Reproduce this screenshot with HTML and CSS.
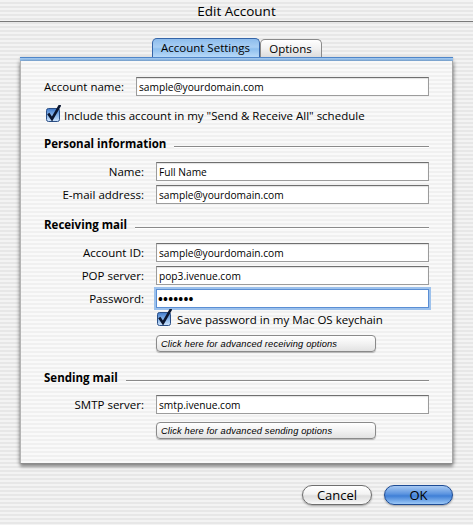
FILE: index.html
```html
<!DOCTYPE html>
<html>
<head>
<meta charset="utf-8">
<link rel="stylesheet" href="styles.css">
</head>
<body>
<div class="titlebar">Edit Account</div>
<div class="content">
  <div class="tabs">
    <div class="tab active">Account Settings</div>
    <div class="tab">Options</div>
  </div>
  <div class="strip"></div>
  <div class="panel">
    <div class="row acct">
      <label class="lbl-acct">Account name:</label>
      <input class="field" value="sample@yourdomain.com">
    </div>
    <div class="check-row first">
      <svg class="cb" width="15" height="17" viewBox="0 0 15 17">
        <defs>
          <linearGradient id="cbg" x1="0" y1="0" x2="0" y2="1">
            <stop offset="0" stop-color="#3f78c9"/>
            <stop offset="0.5" stop-color="#86b4ea"/>
            <stop offset="1" stop-color="#cfe4fb"/>
          </linearGradient>
        </defs>
        <rect x="0.5" y="3.5" width="13" height="13" rx="2" fill="url(#cbg)" stroke="#2b4f86"/>
        <path d="M3 9.5 L6 14 L13.5 1" fill="none" stroke="#0b1630" stroke-width="2.6" stroke-linecap="square"/>
      </svg>
      <span>Include this account in my "Send &amp; Receive All" schedule</span>
    </div>
    <div class="section"><span>Personal information</span></div>
    <div class="row"><label class="lbl">Name:</label><input class="field" value="Full Name"></div>
    <div class="row gap"><label class="lbl">E-mail address:</label><input class="field" value="sample@yourdomain.com"></div>
    <div class="section"><span>Receiving mail</span></div>
    <div class="row"><label class="lbl">Account ID:</label><input class="field" value="sample@yourdomain.com"></div>
    <div class="row gap"><label class="lbl">POP server:</label><input class="field" value="pop3.ivenue.com"></div>
    <div class="row gap"><label class="lbl">Password:</label><input class="field focus pw" value="&#8226;&#8226;&#8226;&#8226;&#8226;&#8226;&#8226;"></div>
    <div class="check-row second">
      <svg class="cb" width="15" height="17" viewBox="0 0 15 17">
        <rect x="0.5" y="3.5" width="13" height="13" rx="2" fill="url(#cbg)" stroke="#2b4f86"/>
        <path d="M3 9.5 L6 14 L13.5 1" fill="none" stroke="#0b1630" stroke-width="2.6" stroke-linecap="square"/>
      </svg>
      <span>Save password in my Mac OS keychain</span>
    </div>
    <button class="adv">Click here for advanced receiving options</button>
    <div class="section s3"><span>Sending mail</span></div>
    <div class="row smtp"><label class="lbl">SMTP server:</label><input class="field" value="smtp.ivenue.com"></div>
    <button class="adv">Click here for advanced sending options</button>
  </div>
  <div class="buttons">
    <button class="pill cancel">Cancel</button>
    <button class="pill ok">OK</button>
  </div>
</div>
</body>
</html>
```
FILE: styles.css
```css
* { box-sizing: border-box; }

body {
  margin: 0;
  width: 473px;
  height: 525px;
  overflow: hidden;
  font-family: "Open Sans", "DejaVu Sans", sans-serif;
  font-size: 11.5px;
  color: #000;
  background: repeating-linear-gradient(to bottom, #f3f3f3 0 2px, #e7e7e7 2px 4px);
}

.titlebar {
  height: 22px;
  border-bottom: 1px solid #7a7a7a;
  text-align: center;
  font-size: 13.5px;
  line-height: 23px;
}

.content {
  padding: 16px 20px 0;
}

.tabs {
  display: flex;
  justify-content: center;
  align-items: flex-end;
  height: 19px;
}

.tab {
  height: 18px;
  width: 62px;
  text-align: center;
  line-height: 17px;
  border: 1px solid #8a8a8a;
  border-bottom: none;
  border-radius: 5px 5px 0 0;
  background: linear-gradient(#ffffff, #f1f1f1 50%, #dcdcdc);
}

.tab.active {
  width: 108px;
  height: 19px;
  line-height: 18px;
  border-color: #3565a8;
  background: linear-gradient(#8dbcec, #a9cff4 45%, #8ebfee 55%, #b8d9f8);
}

.strip {
  height: 4px;
  border-top: 1px solid #4f86c9;
  background: linear-gradient(#a7cdf3, #8ab9ea);
  box-shadow: 0 0 2px rgba(0,0,0,0.25);
}

.panel {
  height: 403px;
  padding: 16px 23px 0 0;
  display: flex;
  flex-direction: column;
  border-left: 1px solid #b4b4b4;
  border-right: 1px solid #a8a8a8;
  border-bottom: 1px solid #8c8c8c;
  background: repeating-linear-gradient(to bottom, #f9f9f9 0 2px, #f0f0f0 2px 4px);
  box-shadow: 0 3px 3px rgba(0,0,0,0.35), 2px 0 3px rgba(0,0,0,0.18), -2px 0 3px rgba(0,0,0,0.15);
}

.row {
  display: flex;
  align-items: center;
  height: 19px;
  margin-top: 11px;
}
.row.acct { margin-top: 0; padding-left: 23px; }
.row.gap { margin-top: 4px; }
.row.smtp { margin-top: 10px; }

.lbl-acct { width: 92px; }
.lbl {
  width: 123px;
  text-align: right;
  margin-right: 12px;
}

.field {
  flex: 1;
  height: 19px;
  min-width: 0;
  border: 1px solid #9c9c9c;
  border-top-color: #6f6f6f;
  background: #fff;
  box-shadow: inset 0 1px 1px rgba(0,0,0,0.12);
  padding: 0 0 0 2px;
  font-family: "Open Sans", "DejaVu Sans", sans-serif;
  font-size: 10.2px;
  color: #000;
  outline: none;
}

.field.focus {
  border: 1px solid #5a8ed4;
  box-shadow: 0 0 0 2px #9cc1ec;
}
.field.pw {
  font-size: 13px;
  letter-spacing: 0.2px;
  font-weight: 700;
  padding-left: 1px;
}

.check-row {
  display: flex;
  align-items: center;
  height: 16px;
}
.check-row.first { margin-top: 11px; padding-left: 25px; }
.check-row.first .cb { margin-right: 3px; }
.check-row.second { margin-top: 3px; padding-left: 136px; }
.check-row.second .cb { margin-right: 5px; }
.cb { margin-top: -3px; flex: none; }

.section {
  display: flex;
  height: 14px;
  line-height: 14px;
  margin-top: 14px;
  padding-left: 23px;
  font-weight: 700;
}
.section.s3 { margin-top: 19px; }
.section::after {
  content: "";
  flex: 1;
  height: 1px;
  margin: 9px 0 0 8px;
  background: #8a8a8a;
  box-shadow: 0 1px 0 #ffffff;
}

.adv {
  margin: 8px 0 0 135px;
  width: 220px;
  height: 17px;
  padding: 0 0 0 4px;
  text-align: left;
  font-family: "Liberation Sans", Arial, sans-serif;
  font-style: italic;
  font-size: 9.3px;
  letter-spacing: 0.15px;
  color: #000;
  border: 1px solid #8a8a8a;
  border-radius: 4px;
  background: linear-gradient(#ffffff, #f2f2f2 50%, #e2e2e2);
  box-shadow: 0 1px 1px rgba(0,0,0,0.25);
}

.buttons {
  display: flex;
  justify-content: flex-end;
  gap: 12px;
  margin-top: 21px;
}

.pill {
  height: 20px;
  border-radius: 10px;
  font-family: "Open Sans", "DejaVu Sans", sans-serif;
  font-size: 13px;
  line-height: 16px;
  color: #000;
  padding: 0;
  box-shadow: 0 1px 2px rgba(0,0,0,0.35);
}
.pill.cancel {
  width: 70px;
  border: 1px solid #6e6e6e;
  background: linear-gradient(#ffffff, #f3f3f3 45%, #dedede 55%, #f8f8f8);
}
.pill.ok {
  width: 69px;
  border: 1px solid #1d4b94;
  background: linear-gradient(#a7c9f3, #5a93df 45%, #3f7fd6 55%, #9cc8f7);
}
```
